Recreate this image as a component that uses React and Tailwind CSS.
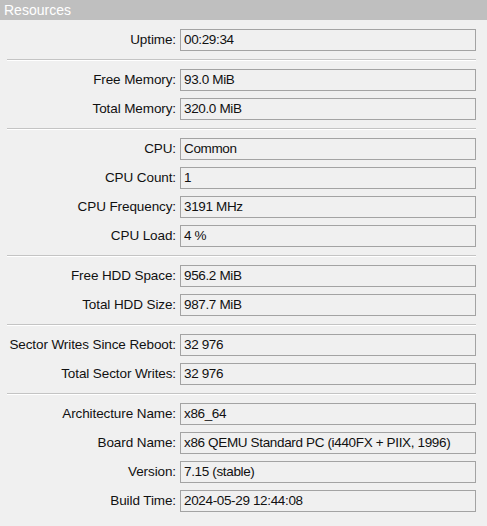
import React from "react";

const sections = [
  [["Uptime:", "00:29:34"]],
  [["Free Memory:", "93.0 MiB"], ["Total Memory:", "320.0 MiB"]],
  [["CPU:", "Common"], ["CPU Count:", "1"], ["CPU Frequency:", "3191 MHz"], ["CPU Load:", "4 %"]],
  [["Free HDD Space:", "956.2 MiB"], ["Total HDD Size:", "987.7 MiB"]],
  [["Sector Writes Since Reboot:", "32 976"], ["Total Sector Writes:", "32 976"]],
  [
    ["Architecture Name:", "x86_64"],
    ["Board Name:", "x86 QEMU Standard PC (i440FX + PIIX, 1996)"],
    ["Version:", "7.15 (stable)"],
    ["Build Time:", "2024-05-29 12:44:08"],
  ],
];

function Row({ label, value }) {
  return (
    <div className="flex items-center h-[22px]">
      <div className="w-[176px] shrink-0 text-right whitespace-nowrap text-[13.5px] tracking-[-0.1px] text-[#111]">{label}</div>
      <div className="ml-[4px] w-[296px] h-[22px] border border-[#a3a3a3] flex items-center pl-[3px] text-[13.5px] tracking-[-0.35px] text-[#111] whitespace-nowrap">
        {value}
      </div>
    </div>
  );
}

export default function App() {
  return (
    <div className="w-[487px] h-[526px] bg-[#f0f0f0] overflow-hidden" style={{ fontFamily: '"Liberation Sans", Arial, sans-serif' }}>
      <div className="h-[20px] bg-[#bfbfbf] text-white text-[14px] leading-[20px] pl-[4px]">Resources</div>
      <div className="pt-[9px]">
        {sections.map((sec, i) => (
          <div key={i}>
            {i > 0 && <div className="ml-[7px] w-[469px] h-[2px] my-[8px] border-t border-[#c4c4c4] border-b-white border-b" />}
            <div className="flex flex-col gap-[7px]">
              {sec.map(([l, v]) => (
                <Row key={l} label={l} value={v} />
              ))}
            </div>
          </div>
        ))}
      </div>
    </div>
  );
}
